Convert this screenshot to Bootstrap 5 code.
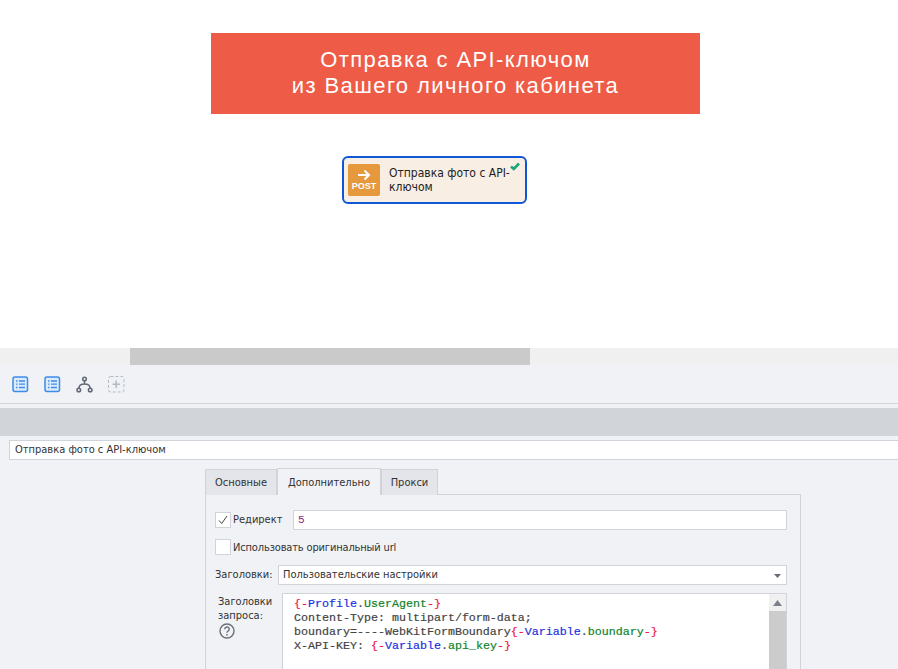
<!DOCTYPE html>
<html lang="ru">
<head>
<meta charset="utf-8"/>
<meta content="width=device-width, initial-scale=1.0" name="viewport"/>
<title>Отправка с API-ключом</title>
<link href="https://cdn.jsdelivr.net/npm/bootstrap@5.3.0/dist/css/bootstrap.min.css" rel="stylesheet"/>
<style>
    html, body { height: 669px; overflow: hidden; }
    body {
      background: #f0f2f6;
      color: #333;
      font-family: "DejaVu Sans Condensed", "Noto Sans", sans-serif;
      font-size: 11px;
      line-height: 14px;
    }
    .canvas-area { height: 348px; background: #fff; padding-top: 33px; }
    .banner {
      width: 489px; height: 81px; margin-left: 211px; padding-bottom: 2px; background: #ee5c47; color: #fff;
      font-family: "Liberation Sans", sans-serif; font-size: 22px; line-height: 26px; letter-spacing: 1.4px;
    }
    .step-node {
      width: 185px; height: 48px; margin: 42px 0 0 342px; gap: 9px;
      background: #f8eee3; border: 2px solid #0f57d6; border-radius: 6px;
      padding: 0 4px; color: #222; font-size: 12px; line-height: 14px;
    }
    .step-ico {
      width: 32px; height: 32px; background: #e6983c; border-radius: 2px; color: #fff;
      font-family: "Liberation Sans", sans-serif; font-size: 9px; font-weight: 700; line-height: 10px;
    }
    .step-check { position: absolute; top: 4px; right: 5px; }
    .hscroll { height: 17px; background: #f0f0f0; padding-left: 130px; }
    .hscroll-thumb { width: 400px; height: 17px; background: #cbcaca; }
    .tool-row { height: 39px; padding-left: 12px; gap: 15px; border-bottom: 1px solid #d0d3da; }
    .grey-band { height: 28px; background: #d1d4d9; margin-top: 4px; }
    .name-field {
      height: 20px; margin: 4px 0 0 9px; background: #fff; border: 1px solid #d0d3da; border-right: 0;
      padding-left: 5px; line-height: 18px;
    }
    .tab-head { margin: 8px 0 0 205px; height: 26px; }
    .tab-item {
      height: 26px; background: #e3e5ea; border: 1px solid #d0d3da; border-bottom: 0; margin-top: 1px;
      line-height: 25px; text-align: center;
    }
    .tab-item.on { background: #f0f2f6; margin-top: 0; height: 27px; line-height: 27px; position: relative; margin-bottom: -1px; }
    .tab-w1 { width: 72px; }
    .tab-w2 { width: 104px; }
    .tab-w3 { width: 57px; }
    .tab-body {
      width: 596px; height: 175px; margin-left: 205px; border: 1px solid #d0d3da; border-bottom: 0;
      padding: 15px 13px 0 9px; overflow: hidden;
    }
    .chk {
      width: 16px; height: 16px; margin-right: 2px; background: #fff; border: 1px solid #d0d3da; flex: none;
    }
    .fld { background: #fff; border: 1px solid #d0d3da; height: 20px; line-height: 18px; padding-left: 4px; }
    .row-redirect { height: 20px; }
    .redirect-field { width: 494px; flex: none; font-family: "Liberation Mono", monospace; }
    .row-orig { height: 16px; margin-top: 9px; }
    .orig-label { padding-top: 2px; letter-spacing: -.15px; }
    .row-head { height: 20px; margin-top: 10px; }
    .head-label { width: 63px; flex: none; }
    .select-caret { position: absolute; right: 5px; top: 8px; }
    .row-req { margin-top: 8px; }
    .req-label { width: 67px; padding: 2px 0 0 3px; flex: none; }
    .req-help { display: block; margin-left: 1px; }
    .code-box {
      flex: 1; height: 76px; background: #fff; border: 1px solid #d0d3da; border-bottom: 0; padding: 3px 0 0 11px;
      font-family: "Liberation Mono", monospace; font-size: 11.67px; line-height: 14px; color: #444;
      white-space: pre; -webkit-text-stroke: .2px;
    }
    .vscroll { position: absolute; top: 0; right: 0; bottom: 0; width: 17px; background: #cccccc; }
    .vscroll-up { height: 17px; background: #f0f0f0; }
    .c-r { color: #f0143c; }
    .c-b { color: #1a2fe0; }
    .c-g { color: #0f8428; }
    .c-p { color: #8a1a8a; }
  </style>
</head>
<body>
<div class="canvas-area">
  <div class="banner d-flex flex-column align-items-center justify-content-center text-center">
    <div>Отправка с API-ключом</div>
    <div>из Вашего личного кабинета</div>
  </div>
  <div class="step-node d-flex align-items-center position-relative">
    <div class="step-ico d-flex flex-column align-items-center justify-content-center flex-shrink-0">
      <svg width="14" height="12" viewBox="0 0 14 12"><path d="M1 6h11M7.500 1.500 12 6l-4.500 4.500" fill="none" stroke="#fff" stroke-width="2"/></svg>
      <div>POST</div>
    </div>
    <div>Отправка фото с API-<br/>ключом</div>
    <svg class="step-check" width="10" height="9" viewBox="0 0 10 9"><path d="M1 4.500 3.800 7 9 1.500" fill="none" stroke="#1fa37a" stroke-width="2.600"/></svg>
  </div>
</div>
<div class="hscroll"><div class="hscroll-thumb"></div></div>
<div class="tool-row d-flex align-items-center">
  <svg width="17" height="17" viewBox="0 0 17 17"><rect x="1" y="1" width="14.500" height="14.500" rx="2" fill="#dcebfb" stroke="#3c8ce8" stroke-width="1.500"/><path d="M4 5h1.500M7 5h6M4 8.200h1.500M7 8.200h6M4 11.500h1.500M7 11.500h6" stroke="#3c8ce8" stroke-width="1.300"/></svg>
  <svg width="17" height="17" viewBox="0 0 17 17"><rect x="1" y="1" width="14.500" height="14.500" rx="2" fill="#dcebfb" stroke="#3c8ce8" stroke-width="1.500"/><path d="M4 5h1.500M7 5h6M4 8.200h1.500M7 8.200h6M4 11.500h1.500M7 11.500h6" stroke="#3c8ce8" stroke-width="1.300"/></svg>
  <svg width="17" height="17" viewBox="0 0 17 17"><g fill="none" stroke="#5f6675" stroke-width="1.500"><circle cx="8.500" cy="3" r="1.800"/><circle cx="2.800" cy="14" r="1.800"/><circle cx="14.200" cy="14" r="1.800"/><path d="M8.500 5v3M3 12c0-3 1.500-4 5.500-4s5.500 1 5.500 4"/></g></svg>
  <svg width="17" height="17" viewBox="0 0 17 17"><rect x=".5" y=".5" width="15.500" height="15.500" rx="2" fill="none" stroke="#b4b9c6" stroke-dasharray="3 2"/><path d="M8.200 4.500v7.500M4.500 8.200H12" stroke="#b4b9c6" stroke-width="1.600"/></svg>
</div>
<div class="grey-band"></div>
<div class="name-field">Отправка фото с API-ключом</div>
<div class="tab-head d-flex">
  <div class="tab-item tab-w1">Основные</div>
  <div class="tab-item on tab-w2">Дополнительно</div>
  <div class="tab-item tab-w3">Прокси</div>
</div>
<div class="tab-body">
  <div class="row-redirect d-flex align-items-center">
    <div class="chk d-flex align-items-center justify-content-center">
      <svg width="10" height="10" viewBox="0 0 10 10"><path d="M1 5.500 3.700 8.500 9 1" fill="none" stroke="#444" stroke-width="1"/></svg>
    </div>
    <div>Редирект</div>
    <div class="fld c-p ms-auto redirect-field">5</div>
  </div>
  <div class="row-orig d-flex align-items-center">
    <div class="chk"></div>
    <div class="orig-label">Использовать оригинальный url</div>
  </div>
  <div class="row-head d-flex align-items-center">
    <div class="head-label">Заголовки:</div>
    <div class="fld flex-grow-1 position-relative">Пользовательские настройки
      <svg class="select-caret" width="7" height="4" viewBox="0 0 7 4"><path d="M0 0h7L3.500 4z" fill="#666b78"/></svg>
    </div>
  </div>
  <div class="row-req d-flex">
    <div class="req-label">Заголовки запроса:
      <svg class="req-help" width="16" height="16" viewBox="0 0 16 16"><circle cx="8" cy="8" r="7" fill="none" stroke="#6b6f78" stroke-width="1.400"/><path d="M5.800 6.200a2.200 2.200 0 1 1 3.400 1.800c-.8.500-1.200 1-1.200 1.800" fill="none" stroke="#6b6f78" stroke-width="1.400"/><circle cx="8" cy="11.800" r=".9" fill="#6b6f78"/></svg>
    </div>
    <div class="code-box position-relative"><span class="c-r">{-</span><span class="c-b">Profile</span>.<span class="c-g">UserAgent</span><span class="c-r">-}</span>
Content-Type: multipart/form-data;
boundary=----WebKitFormBoundary<span class="c-r">{-</span><span class="c-b">Variable</span>.<span class="c-g">boundary</span><span class="c-r">-}</span>
X-API-KEY: <span class="c-r">{-</span><span class="c-b">Variable</span>.<span class="c-g">api_key</span><span class="c-r">-}</span><div class="vscroll"><div class="vscroll-up d-flex align-items-center justify-content-center"><svg width="9" height="6" viewBox="0 0 9 6"><path d="M0 6h9L4.500 0z" fill="#7c808c"/></svg></div></div></div>
  </div>
</div>
<script src="https://cdn.jsdelivr.net/npm/bootstrap@5.3.0/dist/js/bootstrap.bundle.min.js"></script>
</body>
</html>
